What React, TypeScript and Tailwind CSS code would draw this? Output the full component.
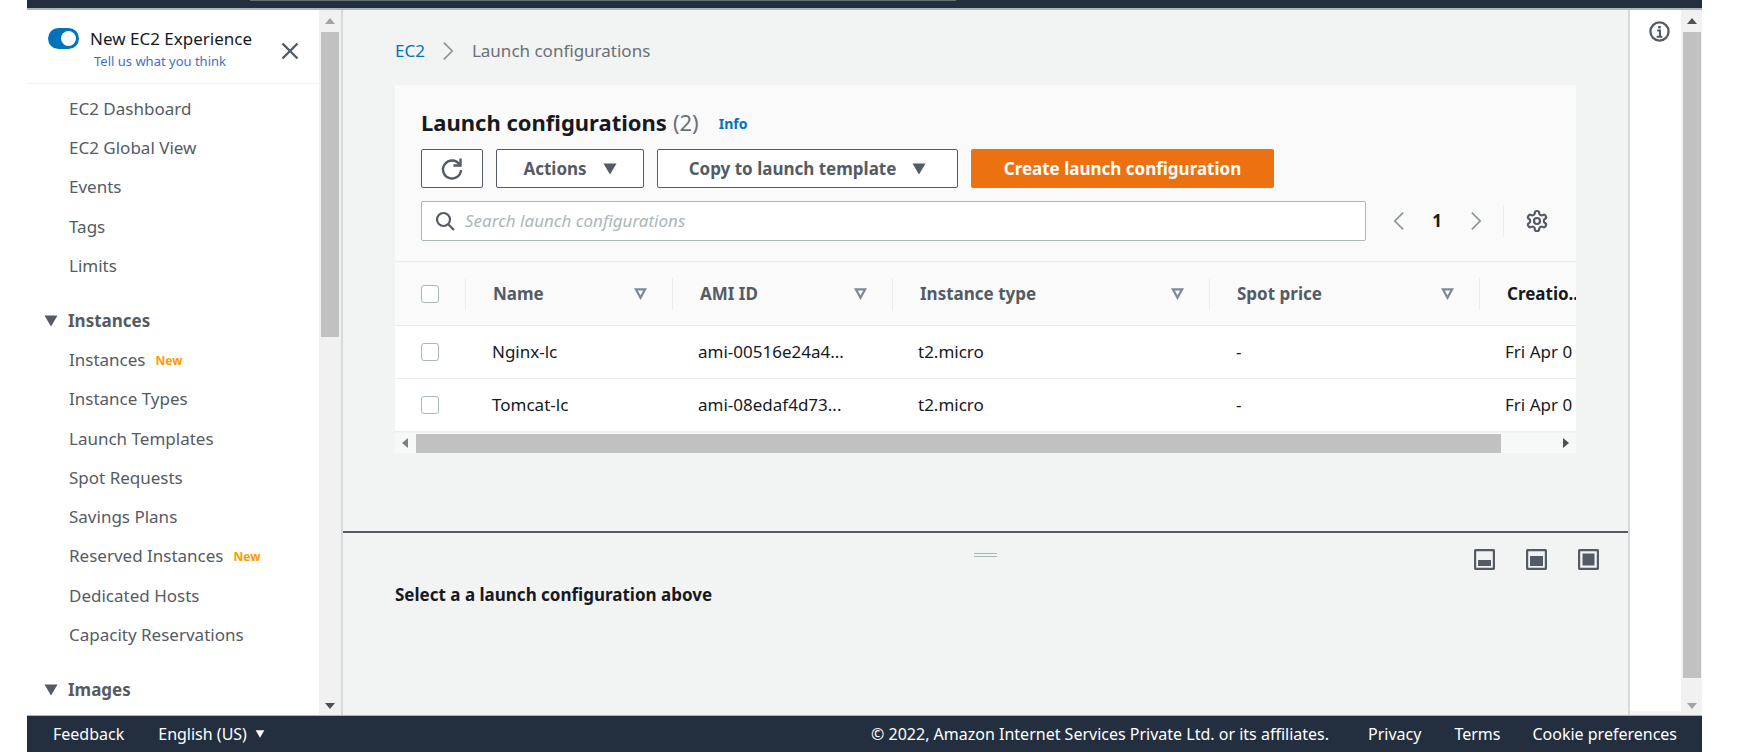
import React from "react";

const Caret = ({ className }: { className: string }) => (
  <svg viewBox="0 0 14 12" className={className} fill="currentColor"><path d="M0.5 0.5h13L7 11.5z" /></svg>
);

const SortIcon = () => (
  <svg viewBox="0 0 14 13" className="w-[13px] h-[12px] text-[#7d8998]" fill="none" stroke="currentColor" strokeWidth="2.4"><path d="M2 1.5h10L7 10.5z" /></svg>
);

const Chevron = ({ left, className }: { left?: boolean; className: string }) => (
  <svg viewBox="0 0 14 24" className={className} fill="none" stroke="currentColor" strokeWidth="2">
    <path d={left ? "M12 2 2 12l10 10" : "M2 2l10 10L2 22"} />
  </svg>
);

const PaneIcon = ({ fill }: { fill: "low" | "mid" | "full" }) => (
  <svg viewBox="0 0 21 21" className="w-[21px] h-[21px]">
    <rect x="1" y="1" width="19" height="19" rx="1.5" fill="none" stroke="#545b64" strokeWidth="2.4" />
    <rect x={fill === "full" ? 4.5 : 4} y={fill === "low" ? 11 : fill === "mid" ? 7 : 4.5} width={fill === "full" ? 12 : 13} height={fill === "low" ? 6 : fill === "mid" ? 10 : 12} fill="#545b64" />
  </svg>
);

const NavItem = ({ label, isNew }: { label: string; isNew?: boolean }) => (
  <div className="h-[39.25px] flex items-center pl-[42px] text-[#545b64] text-[17px] whitespace-nowrap">
    {label}
    {isNew && <span className="ml-[10px] mt-[2px] text-[12px] font-bold text-[#ff9900]">New</span>}
  </div>
);

const NavGroup = ({ label }: { label: string }) => (
  <div className="h-[39px] flex items-center pl-[17px] text-[#545b64] text-[17px] font-bold">
    <Caret className="w-[14px] h-[12px] mr-[10px]" />
    {label}
  </div>
);

const HeadCell = ({ label, className, dark }: { label: string; className: string; dark?: boolean }) => (
  <div className={`shrink-0 h-[32px] border-l border-[#eaeded] pl-[27px] pr-[25px] flex items-center justify-between ${className}`}>
    <span className={`text-[17px] font-bold ${dark ? "text-[#16191f]" : "text-[#545b64]"}`}>{label}</span>
    {!dark && <SortIcon />}
  </div>
);

const Checkbox = () => <div className="w-[18px] h-[18px] shrink-0 rounded-[3px] border border-[#aab7b8] bg-white" />;

const Row = ({ name, ami }: { name: string; ami: string }) => (
  <div className="h-[53px] flex items-center bg-white border-b border-[#eaeded] text-[17px] text-[#16191f] whitespace-nowrap">
    <div className="w-[70px] shrink-0 pl-[26px]"><Checkbox /></div>
    <div className="w-[207px] shrink-0 pl-[27px]">{name}</div>
    <div className="w-[220px] shrink-0 pl-[26px]">{ami}</div>
    <div className="w-[317px] shrink-0 pl-[26px]">t2.micro</div>
    <div className="w-[270px] shrink-0 pl-[27px]">-</div>
    <div className="w-[97px] shrink-0 pl-[26px] overflow-hidden">Fri Apr 0</div>
  </div>
);

const Btn = ({ className, children }: { className: string; children: React.ReactNode }) => (
  <div className={`h-[39px] shrink-0 flex items-center justify-center rounded-[2px] border border-[#545b64] bg-white text-[#545b64] font-bold text-[17px] ${className}`}>{children}</div>
);

const VScroll = ({ className, thumb }: { className: string; thumb: string }) => (
  <div className={`flex flex-col items-center bg-[#f1f1f1] ${className}`}>
    <svg viewBox="0 0 10 6" className={`w-[10px] h-[6px] mt-[8px] mb-[8px] shrink-0 ${thumb === "side" ? "text-[#a3a3a3]" : "text-[#505050]"}`} fill="currentColor"><path d="M0 6 5 0l5 6z" /></svg>
    <div className={`w-[18px] bg-[#c1c1c1] shrink-0 ${thumb === "side" ? "h-[305px]" : "h-[646px]"}`} />
    <div className="flex-1" />
    <svg viewBox="0 0 10 6" className={`w-[10px] h-[6px] mb-[6px] shrink-0 ${thumb === "side" ? "text-[#505050]" : "text-[#a3a3a3]"}`} fill="currentColor"><path d="M0 0h10L5 6z" /></svg>
  </div>
);

export default function App() {
  return (
    <div className="w-[1740px] h-[756px] overflow-hidden bg-white pl-[27px] pr-[38px] font-['Noto_Sans',sans-serif]">
      <div className="h-[8px] bg-[#232f3e] pl-[223px]">
        <div className="w-[706px] h-[1px] bg-[#687078]" />
      </div>
      <div className="h-[2px] bg-[#aab7b8]" />
      <div className="h-[705px] flex">
        <aside className="w-[292px] shrink-0 bg-white overflow-hidden">
          <div className="h-[74px] flex border-b border-[#f2f3f3] pl-[21px]">
            <div className="w-[31px] h-[21px] mt-[18px] rounded-full bg-[#0073bb] flex items-center justify-end pr-[3px] shrink-0">
              <div className="w-[15px] h-[15px] rounded-full bg-white" />
            </div>
            <div className="ml-[11px] mt-[16px] w-[186px] shrink-0">
              <div className="text-[17px] leading-[26px] text-[#16191f] whitespace-nowrap">New EC2 Experience</div>
              <div className="text-[13px] leading-[18px] text-[#3f6fc4] ml-[4px] whitespace-nowrap">Tell us what you think</div>
            </div>
            <svg viewBox="0 0 18 18" className="w-[18px] h-[18px] mt-[32px] ml-[5px] shrink-0" fill="none" stroke="#545b64" strokeWidth="2.4"><path d="M1.5 1.5l15 15M16.5 1.5l-15 15" /></svg>
          </div>
          <div className="pt-[5px]">
            {["EC2 Dashboard", "EC2 Global View", "Events", "Tags", "Limits"].map((l) => <NavItem key={l} label={l} />)}
          </div>
          <div className="mt-[16px]"><NavGroup label="Instances" /></div>
          <NavItem label="Instances" isNew />
          {["Instance Types", "Launch Templates", "Spot Requests", "Savings Plans"].map((l) => <NavItem key={l} label={l} />)}
          <NavItem label="Reserved Instances" isNew />
          {["Dedicated Hosts", "Capacity Reservations"].map((l) => <NavItem key={l} label={l} />)}
          <div className="mt-[16px]"><NavGroup label="Images" /></div>
        </aside>
        <VScroll className="w-[22px] shrink-0 border-r-0" thumb="side" />
        <main className="flex-1 min-w-0 flex border-l-2 border-[#d5dbdb] bg-[#f2f3f3]">
          <div className="w-[1285px] shrink-0 flex flex-col">
            <div className="h-[523px] shrink-0 border-b-2 border-[#545b64] overflow-hidden">
              <div className="ml-[52px] mt-[29px] h-[24px] flex items-center text-[17px]">
                <span className="text-[#0073bb]">EC2</span>
                <Chevron className="w-[12px] h-[20px] ml-[17px] mr-[18px] text-[#879596]" />
                <span className="text-[#687078]">Launch configurations</span>
              </div>
              <section className="ml-[52px] mt-[22px] w-[1181px] bg-[#fafafa] overflow-hidden">
                <div className="pl-[26px] pt-[22px] h-[52px] flex items-center">
                  <span className="text-[22px] font-bold text-[#16191f] whitespace-nowrap">Launch configurations</span>
                  <span className="text-[22px] text-[#687078] ml-[6px]">(2)</span>
                  <span className="text-[14px] font-bold text-[#0073bb] ml-[20px] mt-[3px]">Info</span>
                </div>
                <div className="pl-[26px] mt-[12px] flex gap-[13px]">
                  <Btn className="w-[62px]">
                    <svg viewBox="0 0 24 24" className="w-[24px] h-[24px]" fill="none" stroke="#545b64" strokeWidth="2.4"><path d="M19.5 7.5A9 9 0 1 0 21 13" /><path d="M20.5 1.5v7h-7" /></svg>
                  </Btn>
                  <Btn className="w-[148px]">
                    Actions
                    <Caret className="w-[14px] h-[12px] ml-[16px]" />
                  </Btn>
                  <Btn className="w-[301px]">
                    Copy to launch template
                    <Caret className="w-[14px] h-[12px] ml-[16px]" />
                  </Btn>
                  <div className="w-[303px] h-[39px] rounded-[2px] bg-[#ec7211] text-white font-bold text-[17px] flex items-center justify-center whitespace-nowrap">Create launch configuration</div>
                </div>
                <div className="pl-[26px] mt-[13px] h-[40px] flex items-center">
                  <div className="w-[945px] h-[40px] shrink-0 bg-white rounded-[2px] border border-[#aab7b8] flex items-center pl-[13px]">
                    <svg viewBox="0 0 20 20" className="w-[20px] h-[20px] shrink-0" fill="none" stroke="#545b64" strokeWidth="2.2"><circle cx="8.5" cy="8.5" r="6.5" /><path d="M13.5 13.5l5.5 5.5" /></svg>
                    <span className="ml-[10px] italic text-[17px] text-[#aab7b8]">Search launch configurations</span>
                  </div>
                  <Chevron left className="w-[12px] h-[20px] ml-[27px] text-[#879596] shrink-0" />
                  <span className="ml-[27px] w-[10px] text-center font-bold text-[17px] text-[#16191f]">1</span>
                  <Chevron className="w-[12px] h-[20px] ml-[28px] text-[#879596] shrink-0" />
                  <div className="ml-[21px] h-[32px] border-l border-[#eaeded]" />
                  <svg viewBox="0 0 24 24" className="ml-[21px] w-[24px] h-[24px]" fill="none" stroke="#545b64" strokeWidth="2.2" strokeLinejoin="round"><path d="M12.22 2h-.44a2 2 0 0 0-2 2v.18a2 2 0 0 1-1 1.73l-.43.25a2 2 0 0 1-2 0l-.15-.08a2 2 0 0 0-2.73.73l-.22.38a2 2 0 0 0 .73 2.73l.15.1a2 2 0 0 1 1 1.72v.51a2 2 0 0 1-1 1.74l-.15.09a2 2 0 0 0-.73 2.73l.22.38a2 2 0 0 0 2.73.73l.15-.08a2 2 0 0 1 2 0l.43.25a2 2 0 0 1 1 1.73V20a2 2 0 0 0 2 2h.44a2 2 0 0 0 2-2v-.18a2 2 0 0 1 1-1.73l.43-.25a2 2 0 0 1 2 0l.15.08a2 2 0 0 0 2.73-.73l.22-.39a2 2 0 0 0-.73-2.73l-.15-.08a2 2 0 0 1-1-1.74v-.5a2 2 0 0 1 1-1.74l.15-.09a2 2 0 0 0 .73-2.73l-.22-.38a2 2 0 0 0-2.73-.73l-.15.08a2 2 0 0 1-2 0l-.43-.25a2 2 0 0 1-1-1.73V4a2 2 0 0 0-2-2z" /><circle cx="12" cy="12" r="3" /></svg>
                </div>
                <div className="mt-[20px] h-[65px] border-y border-[#eaeded] flex items-center">
                  <div className="w-[70px] shrink-0 pl-[26px]"><Checkbox /></div>
                  <HeadCell label="Name" className="w-[207px]" />
                  <HeadCell label="AMI ID" className="w-[220px]" />
                  <HeadCell label="Instance type" className="w-[317px]" />
                  <HeadCell label="Spot price" className="w-[270px]" />
                  <HeadCell label="Creatio.." className="w-[97px] !pr-0" dark />
                </div>
                <Row name="Nginx-lc" ami="ami-00516e24a4..." />
                <Row name="Tomcat-lc" ami="ami-08edaf4d73..." />
              </section>
              <div className="ml-[52px] w-[1181px] h-[20px] mt-[1px] flex items-center bg-[#f7f8f8]">
                <svg viewBox="0 0 6 10" className="w-[6px] h-[10px] ml-[7px] mr-[8px] text-[#808080]" fill="currentColor"><path d="M6 0v10L0 5z" /></svg>
                <div className="w-[1085px] h-[19px] bg-[#c1c1c1]" />
                <div className="flex-1" />
                <svg viewBox="0 0 6 10" className="w-[6px] h-[10px] mr-[7px] text-[#505050]" fill="currentColor"><path d="M0 0v10l6-5z" /></svg>
              </div>
            </div>
            <div className="flex-1 relative">
              <div className="flex justify-center pt-[20px] pr-[1px]">
                <div className="w-[23px] h-[4px] border-y border-[#aab7b8]" />
              </div>
              <div className="ml-[52px] mt-[25px] text-[17px] font-bold text-[#16191f] whitespace-nowrap">Select a a launch configuration above</div>
              <div className="absolute top-[16px] left-[1131px] flex gap-[31px]">
                <PaneIcon fill="low" />
                <PaneIcon fill="mid" />
                <PaneIcon fill="full" />
              </div>
            </div>
          </div>
          <div className="flex-1 min-w-0 flex flex-col border-l-2 border-[#d5dbdb]">
            <div className="flex-1 flex">
              <div className="flex-1 flex flex-col">
                <div className="h-[701px] bg-white flex justify-center pt-[11px] pl-[8px]">
                  <svg viewBox="0 0 22 22" className="w-[21px] h-[21px]" fill="none" stroke="#545b64" strokeWidth="2.4"><circle cx="11" cy="11" r="9.5" /><path d="M11 5.2v2.6" strokeWidth="2.8" /><path d="M8.5 10h3v6M8 16.5h6" strokeWidth="2.2" /></svg>
                </div>
              </div>
              <VScroll className="w-[21px] shrink-0" thumb="right" />
            </div>
          </div>
        </main>
      </div>
      <footer className="h-[37px] border-t border-[#aab7b8] bg-[#232f3e] flex items-center text-white text-[16px] whitespace-nowrap">
        <span className="ml-[26px]">Feedback</span>
        <span className="ml-[34px]">English (US)</span>
        <Caret className="w-[10px] h-[8px] ml-[8px]" />
        <div className="flex-1" />
        <span>© 2022, Amazon Internet Services Private Ltd. or its affiliates.</span>
        <span className="ml-[39px]">Privacy</span>
        <span className="ml-[33px]">Terms</span>
        <span className="ml-[32px] mr-[25px]">Cookie preferences</span>
      </footer>
    </div>
  );
}
